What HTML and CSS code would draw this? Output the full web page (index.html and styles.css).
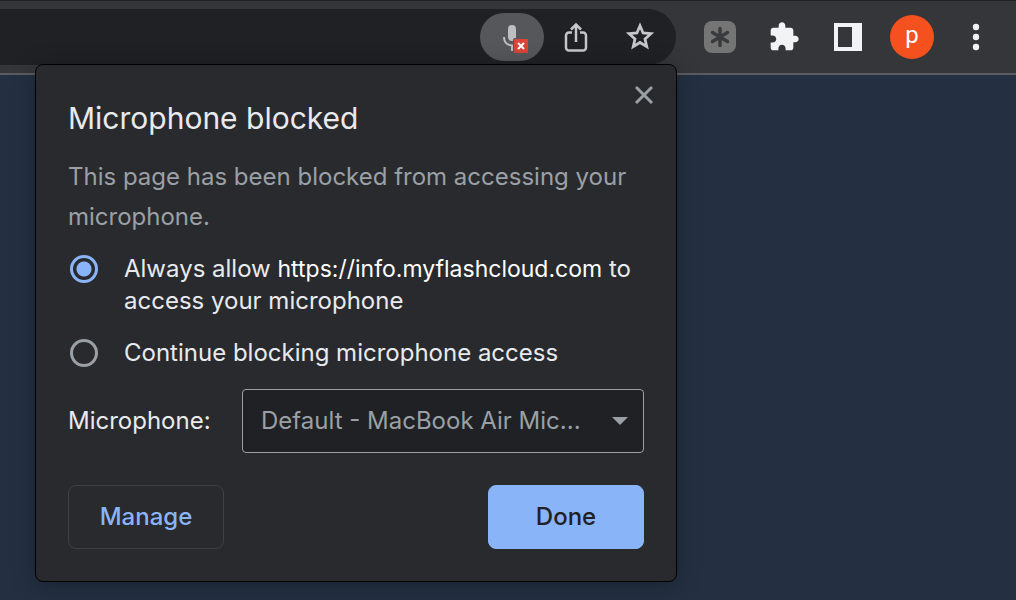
FILE: index.html
```html
<!DOCTYPE html>
<html lang="en">

<head>
    <meta charset="UTF-8">
    <meta name="viewport" content="width=device-width, initial-scale=1.0">
    <title>Microphone blocked</title>
    <link rel="stylesheet" href="styles.css">
</head>

<body>
    <header class="toolbar">
        <div class="omnibox">
            <button class="icon-btn mic-btn" aria-label="Microphone blocked">
                <svg width="64" height="48" viewBox="0 0 64 48">
                    <path d="M28 16a4 4 0 0 1 8 0v9h-1a2 2 0 0 0-2 2v1h-1a4 4 0 0 1-4-4z" fill="#bdbec0"/>
                    <path d="M24 24c0 5 3 8 8 8.500V38" fill="none" stroke="#bdbec0" stroke-width="2"/>
                    <rect x="34" y="26" width="14" height="14" rx="1" fill="#db4437"/>
                    <path d="M38 30l6 6M44 30l-6 6" stroke="#fff" stroke-width="2"/>
                </svg>
            </button>
            <button class="icon-btn" aria-label="Share">
                <svg width="32" height="32" viewBox="0 0 32 32" fill="none" stroke="#c6c7c9" stroke-width="2.500">
                    <path d="M12 11.500H9a3 3 0 0 0-3 3v12a3 3 0 0 0 3 3h14a3 3 0 0 0 3-3v-12a3 3 0 0 0-3-3h-3"/>
                    <path d="M16 21V4M11 8.500l5-5 5 5"/>
                </svg>
            </button>
            <button class="icon-btn" aria-label="Bookmark this tab">
                <svg width="38" height="38" viewBox="0 0 32 32" fill="none" stroke="#c6c7c9" stroke-width="2.300">
                    <path d="M16 6.500l2.600 6.100 6.600.6-5 4.400 1.500 6.500-5.700-3.500-5.700 3.500 1.500-6.500-5-4.400 6.600-.6z"/>
                </svg>
            </button>
        </div>
        <div class="actions">
            <button class="icon-btn" aria-label="Extension">
                <svg width="32" height="32" viewBox="0 0 32 32">
                    <rect width="32" height="32" rx="8" fill="#757575"/>
                    <path d="M16 7.500v17M8.500 11.500l15 9M23.500 11.500l-15 9" stroke="#3a3b3e" stroke-width="3.500" stroke-linecap="round"/>
                </svg>
            </button>
            <button class="icon-btn" aria-label="Extensions">
                <svg width="32" height="32" viewBox="0 0 24 24" fill="#f1f3f4">
                    <path d="M20.500 11H19V7c0-1.100-.9-2-2-2h-4V3.500C13 2.120 11.880 1 10.500 1S8 2.120 8 3.500V5H4c-1.100 0-1.990.9-1.990 2v3.800H3.500c1.490 0 2.700 1.210 2.700 2.700s-1.210 2.700-2.700 2.700H2V20c0 1.100.9 2 2 2h3.800v-1.500c0-1.490 1.210-2.700 2.700-2.700 1.490 0 2.700 1.210 2.700 2.700V22H17c1.100 0 2-.9 2-2v-4h1.500c1.380 0 2.500-1.120 2.500-2.500S21.880 11 20.500 11z"/>
                </svg>
            </button>
            <button class="icon-btn" aria-label="Side panel">
                <svg width="28" height="28" viewBox="0 0 28 28">
                    <path d="M0 0h28v28H0zM4 4v20h14V4z" fill="#f1f3f4" fill-rule="evenodd"/>
                </svg>
            </button>
            <button class="icon-btn" aria-label="Profile"><span class="avatar">p</span></button>
            <button class="icon-btn" aria-label="Menu">
                <svg width="8" height="28" viewBox="0 0 8 28" fill="#f1f3f4">
                    <circle cx="4" cy="4" r="3.200"/>
                    <circle cx="4" cy="14" r="3.200"/>
                    <circle cx="4" cy="24" r="3.200"/>
                </svg>
            </button>
        </div>
    </header>

    <form class="popup">
        <button type="button" class="close" aria-label="Close">
            <svg width="20" height="20" viewBox="0 0 20 20">
                <path d="M2 2l16 16M18 2L2 18" stroke="#9aa0a6" stroke-width="3"/>
            </svg>
        </button>
        <h1>Microphone blocked</h1>
        <p class="description">This page has been blocked from accessing your microphone.</p>

        <div class="options">
            <label class="option">
                <input type="radio" name="access" checked>
                <span>Always allow <span class="url">https://info.myflashcloud.com</span> to access your microphone</span>
            </label>
            <label class="option">
                <input type="radio" name="access">
                <span>Continue blocking microphone access</span>
            </label>
        </div>

        <div class="device">
            <label for="mic">Microphone:</label>
            <div class="select-wrap">
                <select id="mic">
                    <option>Default - MacBook Air Mic...</option>
                </select>
                <svg class="arrow" width="16" height="8" viewBox="0 0 16 8">
                    <path d="M0 0h16L8 8z" fill="#9aa0a6"/>
                </svg>
            </div>
        </div>

        <div class="buttons">
            <button type="button" class="btn">Manage</button>
            <button type="button" class="btn primary">Done</button>
        </div>
    </form>
</body>

</html>
```

FILE: styles.css
```css
* {
    box-sizing: border-box;
}

body {
    margin: 0;
    min-height: 100vh;
    background: #243042;
    font-family: Inter, "Liberation Sans", sans-serif;
    font-size: 24px;
    line-height: 32px;
    color: #e8eaed;
    position: relative;
}

button {
    font: inherit;
    cursor: pointer;
}

.toolbar {
    display: flex;
    align-items: center;
    height: 75px;
    background: #35363a;
    border-top: 1px solid #202124;
    border-bottom: 2px solid #5b5c5f;
}

.omnibox {
    flex: 1;
    display: flex;
    justify-content: flex-end;
    align-items: center;
    height: 56px;
    padding-right: 4px;
    background: #202124;
    border-radius: 0 28px 28px 0;
}

.actions {
    display: flex;
    padding: 0 8px 0 12px;
}

.icon-btn {
    display: flex;
    align-items: center;
    justify-content: center;
    width: 64px;
    height: 48px;
    padding: 0;
    border: none;
    background: none;
}

.mic-btn {
    background: #56575b;
    border-radius: 24px;
}

.avatar {
    width: 44px;
    height: 44px;
    border-radius: 50%;
    background: #f4511e;
    color: #fff;
    font-family: Roboto, sans-serif;
    line-height: 40px;
    text-align: center;
}

.popup {
    position: absolute;
    top: 64px;
    left: 35px;
    width: 642px;
    max-width: calc(100% - 35px);
    padding: 33px 32px 32px;
    background: #292a2d;
    border: 1px solid #000;
    border-radius: 8px;
    box-shadow: 0 4px 24px rgba(0, 0, 0, 0.3);
}

.close {
    position: absolute;
    top: 14px;
    right: 16px;
    display: flex;
    align-items: center;
    justify-content: center;
    width: 32px;
    height: 32px;
    padding: 0;
    border: none;
    background: none;
}

h1 {
    margin: 0;
    font-size: 30px;
    font-weight: 400;
    line-height: 40px;
}

.description {
    margin: 19px 0 16px;
    line-height: 40px;
    color: #9aa0a6;
}

.options {
    display: grid;
    gap: 20px;
}

.option {
    display: flex;
    align-items: flex-start;
    gap: 26px;
}

.option input {
    appearance: none;
    flex: none;
    width: 28px;
    height: 28px;
    margin: 2px 0 0 2px;
    border: 3px solid #9aa0a6;
    border-radius: 50%;
}

.option input:checked {
    border-color: #8ab4f8;
    background: radial-gradient(circle, #8ab4f8 7px, transparent 8px);
}

.url {
    font-size: 23px;
    color: #fff;
}

.device {
    display: flex;
    align-items: center;
    justify-content: space-between;
    margin: 20px 0 32px;
}

.select-wrap {
    position: relative;
    width: 402px;
}

.select-wrap select {
    appearance: none;
    width: 100%;
    height: 64px;
    padding: 0 56px 0 18px;
    background: #202124;
    border: 1px solid #9aa0a6;
    border-radius: 4px;
    font: inherit;
    color: #9aa0a6;
}

.arrow {
    position: absolute;
    top: 28px;
    right: 16px;
    pointer-events: none;
}

.buttons {
    display: flex;
    justify-content: space-between;
}

.btn {
    width: 156px;
    height: 64px;
    background: none;
    border: 1px solid #3c4043;
    border-radius: 8px;
    font-weight: 500;
    color: #8ab4f8;
}

.btn.primary {
    background: #8ab4f8;
    border-color: #8ab4f8;
    color: #202124;
}
```
